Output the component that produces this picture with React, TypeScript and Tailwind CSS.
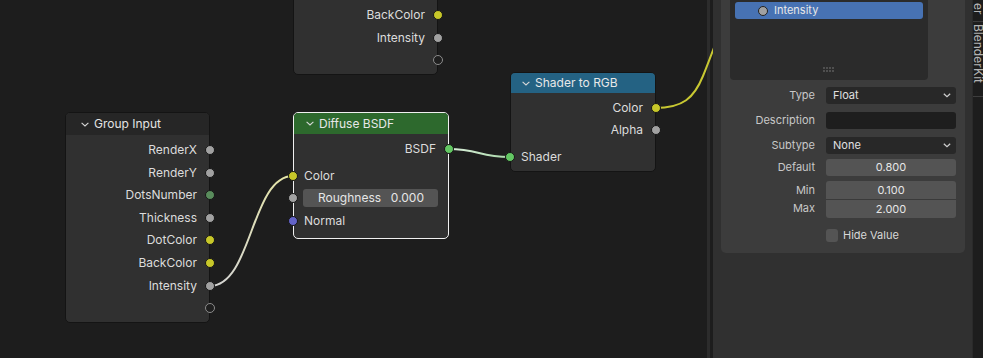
import React from "react";

function Sock({ c, hollow, side }: { c?: string; hollow?: boolean; side: "l" | "r" }) {
  const pos = side === "l" ? "left-[-6px]" : "right-[-6px]";
  if (hollow)
    return (
      <span className={`absolute ${pos} top-1/2 -translate-y-1/2 w-[10px] h-[10px] rounded-full border border-[#8c8c8c] bg-[#1f1f1f]`} />
    );
  return (
    <span className={`absolute ${pos} top-1/2 -translate-y-1/2 w-[10px] h-[10px] rounded-full border border-[#161616] ${c}`} />
  );
}

function Out({ label, c, hollow, h }: { label?: string; c?: string; hollow?: boolean; h: string }) {
  return (
    <div className={`relative flex items-center justify-end pr-[12px] ${h}`}>
      <span>{label}</span>
      <Sock c={c} hollow={hollow} side="r" />
    </div>
  );
}

function In({ label, c, h, mt }: { label: string; c: string; h: string; mt?: string }) {
  return (
    <div className={`relative flex items-center pl-[10px] ${h} ${mt ?? ""}`}>
      <span>{label}</span>
      <Sock c={c} side="l" />
    </div>
  );
}

function Chev() {
  return (
    <svg width="8" height="5" viewBox="0 0 8 5" className="shrink-0">
      <polyline points="0.6,0.8 4,4 7.4,0.8" fill="none" stroke="#d8d8d8" strokeWidth="1.1" />
    </svg>
  );
}

function DropChev() {
  return (
    <svg width="8" height="5" viewBox="0 0 8 5">
      <polyline points="0.8,0.8 4,3.8 7.2,0.8" fill="none" stroke="#d0d0d0" strokeWidth="1.2" />
    </svg>
  );
}

const YEL = "bg-[#c7c729]";
const GRY = "bg-[#a1a1a1]";
const GRN = "bg-[#63c763]";
const INT = "bg-[#598c5c]";
const PUR = "bg-[#6363c7]";

function Canvas() {
  return (
    <div className="relative w-[707px] h-[358px] shrink-0 bg-[#1d1d1d] text-[12px] text-[#dcdcdc]">
      <svg className="absolute left-0 top-0 overflow-visible" width="707" height="358">
        <defs>
          <linearGradient id="gi" gradientUnits="userSpaceOnUse" x1="210" y1="286" x2="293" y2="176">
            <stop offset="0" stopColor="#d4d4d4" />
            <stop offset="1" stopColor="#e4e4a6" />
          </linearGradient>
          <linearGradient id="gs" gradientUnits="userSpaceOnUse" x1="448" y1="149" x2="510" y2="157">
            <stop offset="0" stopColor="#dcefdc" />
            <stop offset="1" stopColor="#a9d9a9" />
          </linearGradient>
        </defs>
        <path d="M210 286 C252 286 251 176 293 176" fill="none" stroke="url(#gi)" strokeWidth="2" />
        <path d="M448 149 C480 149 478 157 510 157" fill="none" stroke="url(#gs)" strokeWidth="2" />
        <path d="M655 108 C683 108 694 98 703 76 S716 40 728 15" fill="none" stroke="#c8c832" strokeWidth="2" />
      </svg>

      {/* top partial node */}
      <div className="absolute left-[293px] top-[-20px] w-[145px] rounded-[5px] border border-[#141414] bg-[#303030] pt-[23px] pb-[2.75px]">
        <Out label="BackColor" c={YEL} h="h-[22.5px]" />
        <Out label="Intensity" c={GRY} h="h-[22.5px]" />
        <Out hollow h="h-[22.5px]" />
      </div>

      {/* Group Input */}
      <div className="absolute left-[65px] top-[112px] w-[145px] rounded-[5px] border border-[#141414] bg-[#303030]">
        <div className="flex h-[22px] items-center gap-[5px] rounded-t-[4px] bg-[#262626] pl-[15px] text-[#e4e4e4]">
          <Chev />
          <span>Group Input</span>
        </div>
        <div className="pt-[3.7px] pb-[2.5px]">
          <Out label="RenderX" c={GRY} h="h-[22.6px]" />
          <Out label="RenderY" c={GRY} h="h-[22.6px]" />
          <Out label="DotsNumber" c={INT} h="h-[22.6px]" />
          <Out label="Thickness" c={GRY} h="h-[22.6px]" />
          <Out label="DotColor" c={YEL} h="h-[22.6px]" />
          <Out label="BackColor" c={YEL} h="h-[22.6px]" />
          <Out label="Intensity" c={GRY} h="h-[22.6px]" />
          <Out hollow h="h-[22.6px]" />
        </div>
      </div>

      {/* Diffuse BSDF */}
      <div className="absolute left-[293px] top-[112px] w-[156px] rounded-[5px] border border-[#f0f0f0] bg-[#303030]">
        <div className="flex h-[21px] items-center gap-[5px] rounded-t-[4px] bg-[#2d692d] pl-[12px] text-[#e8e8e8]">
          <Chev />
          <span>Diffuse BSDF</span>
        </div>
        <div className="pt-[4px] pb-[6px]">
          <Out label="BSDF" c={GRN} h="h-[22px]" />
          <In label="Color" c={YEL} h="h-[22px]" mt="mt-[5px]" />
          <div className="relative mt-[2px] h-[18px]">
            <Sock c={GRY} side="l" />
            <div className="ml-[9px] mr-[10px] flex h-[18px] items-center justify-between rounded-[3px] bg-[#545454] pl-[15px] pr-[14px] text-[#e6e6e6]">
              <span>Roughness</span>
              <span>0.000</span>
            </div>
          </div>
          <In label="Normal" c={PUR} h="h-[22px]" mt="mt-[3px]" />
        </div>
      </div>

      {/* Shader to RGB */}
      <div className="absolute left-[510px] top-[72px] w-[146px] rounded-[5px] border border-[#141414] bg-[#303030]">
        <div className="flex h-[20px] items-center gap-[5px] rounded-t-[4px] bg-[#246283] pl-[11px] text-[#e8e8e8]">
          <Chev />
          <span>Shader to RGB</span>
        </div>
        <div className="pt-[4px] pb-[3px]">
          <Out label="Color" c={YEL} h="h-[22px]" />
          <Out label="Alpha" c={GRY} h="h-[22px]" />
          <In label="Shader" c={GRN} h="h-[22px]" mt="mt-[5px]" />
        </div>
      </div>
    </div>
  );
}

function Label({ children }: { children: React.ReactNode }) {
  return <div className="w-[94px] shrink-0 text-right text-[#c8c8c8]">{children}</div>;
}

function Sidebar() {
  return (
    <div className="relative z-10 flex w-[259px] shrink-0 flex-col bg-[#303030] pl-[8px] text-[11px]">
      <div className="flex w-[244px] flex-col rounded-b-[5px] bg-[#3c3c3c] pb-[11px]">
        <div className="ml-[9px] flex h-[80px] w-[198px] flex-col rounded-b-[4px] bg-[#2b2b2b]">
          <div className="mx-[5px] mt-[2px] flex h-[17px] items-center rounded-[3px] bg-[#4772b3] pl-[23px] text-[#e8e8e8]">
            <span className="mr-[6px] h-[10px] w-[10px] rounded-full border border-[#222] bg-[#a1a1a1]" />
            <span>Intensity</span>
          </div>
          <div className="mt-auto mb-[7px] flex justify-center">
            <svg width="12" height="6" viewBox="0 0 12 6">
              {[0, 3, 6, 9].map((x) => (
                <React.Fragment key={x}>
                  <rect x={x + 0.5} y="0.5" width="1" height="1" fill="#bdbdbd" />
                  <rect x={x + 0.5} y="3.5" width="1" height="1" fill="#bdbdbd" />
                </React.Fragment>
              ))}
            </svg>
          </div>
        </div>

        <div className="mt-[7px] flex h-[17px] items-center gap-[11px]">
          <Label>Type</Label>
          <div className="flex h-[17px] w-[130px] items-center justify-between rounded-[3px] bg-[#282828] pl-[7px] pr-[5px] text-[#e0e0e0]">
            <span>Float</span>
            <DropChev />
          </div>
        </div>
        <div className="mt-[8px] flex h-[17px] items-center gap-[11px]">
          <Label>Description</Label>
          <div className="h-[17px] w-[130px] rounded-[3px] bg-[#1e1e1e]" />
        </div>
        <div className="mt-[8px] flex h-[17px] items-center gap-[11px]">
          <Label>Subtype</Label>
          <div className="flex h-[17px] w-[130px] items-center justify-between rounded-[3px] bg-[#282828] pl-[7px] pr-[5px] text-[#e0e0e0]">
            <span>None</span>
            <DropChev />
          </div>
        </div>
        <div className="mt-[5px] flex h-[17px] items-center gap-[11px]">
          <Label>Default</Label>
          <div className="flex h-[17px] w-[130px] items-center justify-center rounded-[3px] bg-[#545454] text-[#e6e6e6]">0.800</div>
        </div>
        <div className="mt-[5px] flex gap-[11px]">
          <div className="flex w-[94px] shrink-0 flex-col text-right text-[#c8c8c8]">
            <div className="flex h-[18px] items-center justify-end">Min</div>
            <div className="flex h-[19px] items-center justify-end">Max</div>
          </div>
          <div className="flex w-[130px] flex-col">
            <div className="flex h-[18px] items-center justify-center rounded-t-[3px] bg-[#545454] text-[#e6e6e6]">0.100</div>
            <div className="flex h-[19px] items-center justify-center rounded-b-[3px] border-t border-[#3a3a3a] bg-[#545454] text-[#e6e6e6]">2.000</div>
          </div>
        </div>
        <div className="mt-[11px] flex h-[13px] items-center pl-[105px]">
          <span className="h-[13px] w-[12px] rounded-[3px] bg-[#545454]" />
          <span className="ml-[5px] text-[#d8d8d8]">Hide Value</span>
        </div>
      </div>
    </div>
  );
}

function Tabs() {
  return (
    <div className="flex w-[11px] shrink-0 flex-col border-l border-[#2a2a2a] bg-[#1d1d1d] text-[12px] text-[#b4b4b4]">
      <div className="flex h-[21px] flex-col items-end justify-end pb-[6px]">
        <span className="leading-[10px] [writing-mode:vertical-rl]">er</span>
      </div>
      <div className="h-px shrink-0 bg-[#3d3d3d]" />
      <div className="flex h-[74px] shrink-0 flex-col items-end pt-[2px]">
        <span className="leading-[10px] [writing-mode:vertical-rl]">BlenderKit</span>
      </div>
      <div className="h-px shrink-0 bg-[#3d3d3d]" />
    </div>
  );
}

export default function App() {
  return (
    <div className="flex h-[358px] w-[983px] overflow-hidden bg-[#1d1d1d] font-['Inter',sans-serif]">
      <Canvas />
      <div className="w-[3px] shrink-0 bg-[#2c2c2c]" />
      <div className="w-[3px] shrink-0 bg-[#1d1d1d]" />
      <Sidebar />
      <Tabs />
    </div>
  );
}
